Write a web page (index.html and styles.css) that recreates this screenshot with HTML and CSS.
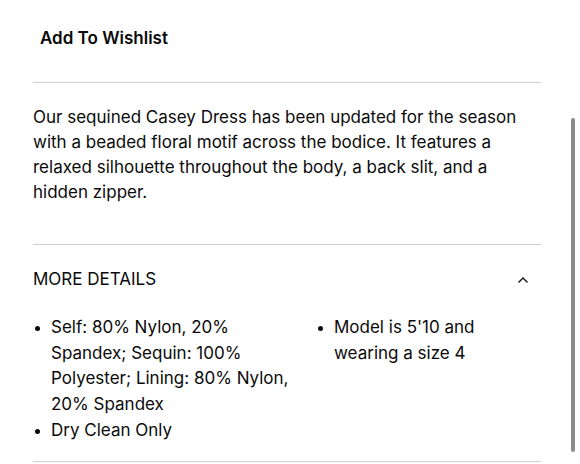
FILE: index.html
```html
<!DOCTYPE html>
<html lang="en">
<head>
<meta charset="utf-8">
<title>Casey Dress</title>
<link rel="stylesheet" href="styles.css">
</head>
<body>
<div class="panel">
  <div class="wishlist">
    <button class="wishlist-btn" type="button">Add To Wishlist</button>
  </div>
  <p class="description">Our sequined Casey Dress has been updated for the season with a beaded floral motif across the bodice. It features a relaxed silhouette throughout the body, a back slit, and a hidden zipper.</p>
  <section class="details">
    <div class="details-head">
      <span class="details-title">MORE DETAILS</span>
      <svg class="chevron" width="12" height="8" viewBox="0 0 12 8" aria-hidden="true"><path d="M1.5 6.5 L6 2 L10.5 6.5" fill="none" stroke="#111" stroke-width="1.4"/></svg>
    </div>
    <div class="details-body">
      <ul class="bullets">
        <li>Self: 80% Nylon, 20% Spandex; Sequin: 100% Polyester; Lining: 80% Nylon, 20% Spandex</li>
        <li>Dry Clean Only</li>
      </ul>
      <ul class="bullets">
        <li>Model is 5'10 and wearing a size 4</li>
      </ul>
    </div>
  </section>
</div>
<div class="scrollbar"></div>
</body>
</html>
```
FILE: styles.css
```css
html, body {
  margin: 0;
  padding: 0;
  background: #fff;
}
body {
  font-family: Inter, "Liberation Sans", Arial, sans-serif;
  color: #0a0a0a;
  font-size: 17px;
  line-height: 25px;
}
.panel {
  width: 508px;
  padding-left: 33px;
}
.wishlist {
  padding: 25.5px 0 31.5px 7px;
  border-bottom: 1px solid #cfcfcf;
}
.wishlist-btn {
  font: inherit;
  font-weight: 600;
  color: #0a0a0a;
  background: none;
  border: 0;
  padding: 0;
  line-height: 25px;
}
.description {
  margin: 0;
  padding: 22px 0 39px;
  border-bottom: 1px solid #cfcfcf;
}
.details {
  border-bottom: 1px solid #cfcfcf;
}
.details-head {
  display: flex;
  align-items: center;
  justify-content: space-between;
  padding: 22px 0 23px;
}
.chevron {
  margin-right: 12px;
}
.details-body {
  display: grid;
  grid-template-columns: 262px 1fr;
  column-gap: 21px;
  padding-bottom: 16px;
  line-height: 25.5px;
}
.bullets {
  list-style: none;
  margin: 0;
  padding: 0;
}
.bullets li {
  position: relative;
  padding-left: 18px;
  margin-bottom: 1px;
}
.bullets li::before {
  content: "";
  position: absolute;
  left: 2px;
  top: 11px;
  width: 5px;
  height: 5px;
  border-radius: 50%;
  background: #0a0a0a;
}
.scrollbar {
  position: absolute;
  left: 571px;
  top: 118px;
  width: 4px;
  height: 334px;
  border-radius: 2px;
  background: #8a8a8a;
}
```
